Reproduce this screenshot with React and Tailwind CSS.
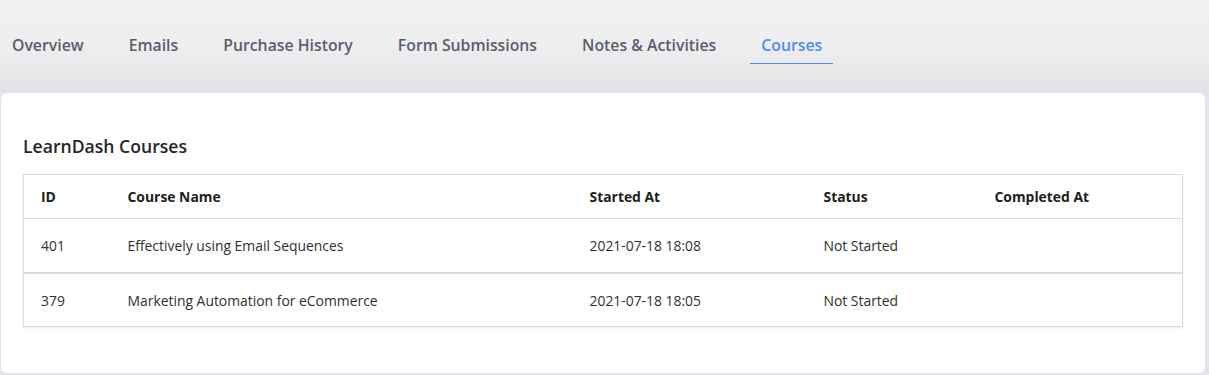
const tabs = ['Overview', 'Emails', 'Purchase History', 'Form Submissions', 'Notes & Activities', 'Courses'];

const courses = [
    { id: 401, name: 'Effectively using Email Sequences', started: '2021-07-18 18:08', status: 'Not Started', completed: '' },
    { id: 379, name: 'Marketing Automation for eCommerce', started: '2021-07-18 18:05', status: 'Not Started', completed: '' },
];

function Tabs({ active }) {
    return (
        <div className="h-[93px] bg-gradient-to-b from-[#f0f0f0] via-[#eeeeef] to-[#e1e3e6] pt-[25px]">
            <nav className="flex gap-[23px] pl-[1px]">
                {tabs.map((tab) => (
                    <button
                        key={tab}
                        className={`px-[11px] pt-[10px] pb-[8px] border-b text-[15.8px] leading-[20px] font-semibold ${
                            tab === active
                                ? 'text-[#4f8cf3] border-[#4f8df5]'
                                : 'text-[#5a5d6d] border-transparent'
                        }`}
                    >
                        {tab}
                    </button>
                ))}
            </nav>
        </div>
    );
}

function CoursesTable({ rows }) {
    return (
        <table className="w-full table-fixed border border-[#dcdcdc] shadow-[0_1px_2px_rgba(0,0,0,0.08)] text-[13.9px]">
            <colgroup>
                <col className="w-[87px]" />
                <col className="w-[462px]" />
                <col className="w-[234px]" />
                <col className="w-[171px]" />
                <col />
            </colgroup>
            <thead>
                <tr className="h-[44px] border-b border-[#dcdcdc] text-left text-[#1d1d1d]">
                    <th className="pl-[17px] pt-[2px] font-bold">ID</th>
                    <th className="pl-[17px] pt-[2px] font-bold">Course Name</th>
                    <th className="pl-[17px] pt-[2px] font-bold">Started At</th>
                    <th className="pl-[17px] pt-[2px] font-bold">Status</th>
                    <th className="pl-[17px] pt-[2px] font-bold">Completed At</th>
                </tr>
            </thead>
            <tbody className="text-[#2f2f2f]">
                {rows.map((row, i) => (
                    <tr
                        key={row.id}
                        className={`h-[54px] ${i < rows.length - 1 ? 'border-b-2 border-[#dcdcdc]' : ''}`}
                    >
                        <td className="pl-[17px] pt-[3px]">{row.id}</td>
                        <td className="pl-[17px] pt-[3px]">{row.name}</td>
                        <td className="pl-[17px] pt-[3px]">{row.started}</td>
                        <td className="pl-[17px] pt-[3px]">{row.status}</td>
                        <td className="pl-[17px] pt-[3px]">{row.completed}</td>
                    </tr>
                ))}
            </tbody>
        </table>
    );
}

export default function App() {
    return (
        <div className="w-[1209px] h-[375px] overflow-hidden bg-[#e3e5e8] font-['Open_Sans',sans-serif]">
            <Tabs active="Courses" />
            <div className="ml-[1px] w-[1204px] h-[280px] bg-white rounded-md px-[22px] pt-[41px]">
                <h2 className="text-[17.6px] leading-[24px] font-semibold text-[#262626] mb-[16px]">LearnDash Courses</h2>
                <CoursesTable rows={courses} />
            </div>
        </div>
    );
}
